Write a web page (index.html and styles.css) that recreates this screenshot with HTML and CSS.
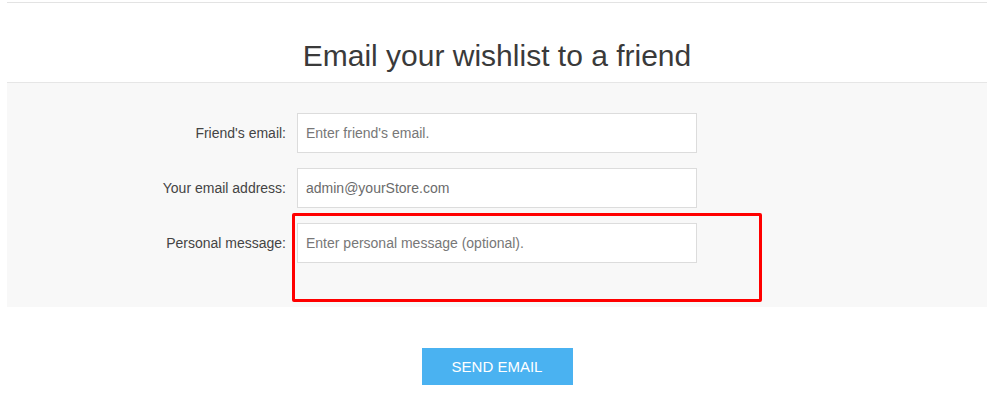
FILE: index.html
```html
<!DOCTYPE html>
<html lang="en">
<head>
<meta charset="utf-8">
<title>Email your wishlist to a friend</title>
<link rel="stylesheet" href="styles.css">
</head>
<body>
<div class="page">
  <h1 class="title">Email your wishlist to a friend</h1>
  <form class="panel">
    <div class="row">
      <label class="label" for="friend">Friend's email:</label>
      <input class="field" id="friend" type="text" placeholder="Enter friend's email.">
    </div>
    <div class="row">
      <label class="label" for="own">Your email address:</label>
      <input class="field filled" id="own" type="text" value="admin@yourStore.com">
    </div>
    <div class="row">
      <label class="label" for="msg">Personal message:</label>
      <div class="field-wrap">
        <input class="field" id="msg" type="text" placeholder="Enter personal message (optional).">
        <div class="highlight"></div>
      </div>
    </div>
  </form>
  <div class="actions">
    <button class="send" type="button">SEND EMAIL</button>
  </div>
</div>
</body>
</html>
```

FILE: styles.css
```css
* { box-sizing: border-box; }
html, body { margin: 0; padding: 0; background: #fff; }
body { font-family: "Liberation Sans", Arial, sans-serif; color: #444; }

.page {
  width: 980px;
  margin: 2px 0 0 7px;
  border-top: 1px solid #e3e3e3;
}

.title {
  margin: 0;
  padding: 35px 0 8px;
  font-size: 30px;
  line-height: 36px;
  font-weight: normal;
  color: #3a3a3a;
  text-align: center;
}

.panel {
  background: #f8f8f8;
  border-top: 1px solid #e6e6e6;
  padding: 30px 0 44px;
  display: flex;
  flex-direction: column;
  gap: 15px;
}

.row {
  display: grid;
  grid-template-columns: 279px 400px;
  column-gap: 11px;
  align-items: center;
}

.label {
  text-align: right;
  font-size: 14px;
  color: #444;
}

.field-wrap { position: relative; }

.field {
  display: block;
  width: 400px;
  height: 40px;
  border: 1px solid #dcdcdc;
  background: #fff;
  padding: 0 8px;
  font-family: "Liberation Sans", Arial, sans-serif;
  font-size: 14px;
  color: #6b6b6b;
  outline: none;
  border-radius: 0;
}
.field::placeholder { color: #777; opacity: 1; }

.highlight {
  position: absolute;
  left: -5px;
  top: -10px;
  width: 470px;
  height: 89px;
  border: 3px solid #ff0000;
  border-radius: 2px;
  pointer-events: none;
}

.actions {
  display: flex;
  justify-content: center;
  padding-top: 41px;
}

.send {
  width: 151px;
  height: 37px;
  border: none;
  background: #4ab2f1;
  color: #fff;
  font-family: "Liberation Sans", Arial, sans-serif;
  font-size: 15px;
  cursor: pointer;
}
```
